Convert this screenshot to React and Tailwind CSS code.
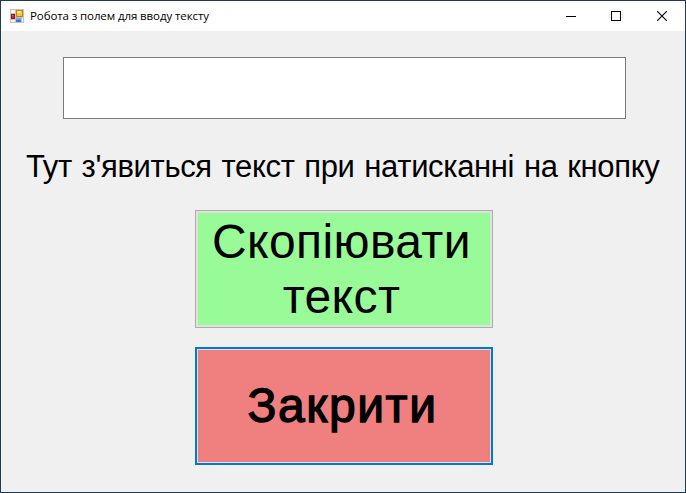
function AppIcon() {
  return (
    <svg width="14" height="14" viewBox="0 0 14 14" shapeRendering="crispEdges">
      <rect x="0" y="0" width="14" height="14" fill="#c3c3c3" />
      <rect x="1" y="1" width="4" height="3" fill="#f4f4f4" />
      <rect x="1" y="11" width="4" height="2" fill="#f4f4f4" />
      <rect x="12" y="9" width="1" height="4" fill="#f4f4f4" />
      <rect x="1" y="5" width="4" height="5" fill="#8e1515" />
      <rect x="2" y="6" width="2" height="3" fill="#c9302c" />
      <rect x="2" y="6" width="1" height="1" fill="#e07068" />
      <rect x="6" y="1" width="7" height="7" fill="#b98410" />
      <rect x="7" y="2" width="5" height="5" fill="#f8c832" />
      <rect x="7" y="2" width="4" height="2" fill="#fde68a" />
      <rect x="6" y="9" width="5" height="4" fill="#3f74cc" />
      <rect x="6" y="9" width="5" height="2" fill="#6fa4ee" />
    </svg>
  );
}

function TitleBar() {
  return (
    <header className="flex h-[30px] shrink-0 items-center bg-white pl-[9px]">
      <AppIcon />
      <h1 className="ml-[6px] whitespace-nowrap font-['Open_Sans','Noto_Sans',sans-serif] text-[11.5px] leading-[16px] tracking-[-0.1px]">
        Робота з полем для вводу тексту
      </h1>
      <div className="ml-auto flex" aria-hidden="true">
        <div className="flex h-[30px] w-[46px] items-center justify-center">
          <svg width="10" height="10" shapeRendering="crispEdges">
            <rect y="5" width="10" height="1" />
          </svg>
        </div>
        <div className="flex h-[30px] w-[45px] items-center justify-start pl-[17px]">
          <svg width="10" height="10" shapeRendering="crispEdges">
            <path d="M.5.5h9v9h-9z" fill="none" stroke="#000" />
          </svg>
        </div>
        <div className="flex h-[30px] w-[46px] items-center justify-center">
          <svg width="10" height="10">
            <path d="M0 0l10 10M10 0L0 10" fill="none" stroke="#000" strokeWidth="1.1" />
          </svg>
        </div>
      </div>
    </header>
  );
}

export default function App() {
  return (
    <div className="flex h-[493px] w-[686px] flex-col overflow-hidden border border-[#1f3b54] bg-[#f0f0f0] font-['Liberation_Sans',Arial,sans-serif] text-black">
      <TitleBar />
      <main className="flex flex-1 flex-col items-start">
        <input
          type="text"
          className="mt-[26px] ml-[62px] h-[62px] w-[563px] border border-[#7a7a7a] bg-white px-2 text-[32px] outline-none"
        />
        <p className="mt-[30px] ml-[25px] h-[36px] whitespace-nowrap text-[31px] leading-[36px] tracking-[-0.35px] [word-spacing:1.5px]">
          Тут з'явиться текст при натисканні на кнопку
        </p>
        <button className="mt-[25px] ml-[194px] flex h-[118px] w-[298px] flex-col items-center border border-[#adadad] bg-[#e1e1e1] p-[2px]">
          <span className="flex h-[112px] w-full flex-col items-center justify-center bg-[#98fb98] pr-[5px] text-[48px] leading-[55px] tracking-[0.4px]">
            <span className="whitespace-nowrap">Скопіювати</span>
            <span className="whitespace-nowrap">текст</span>
          </span>
        </button>
        <button className="mt-[19px] ml-[194px] flex h-[118px] w-[298px] flex-col border-2 border-[#0078d7] bg-[#e1e1e1] p-px">
          <span className="flex h-[112px] w-full items-center justify-center bg-[#f08080] pr-[3px] pb-[2px] text-[48px] leading-[55px] tracking-[1.6px] [-webkit-text-stroke:1.3px_black]">
            Закрити
          </span>
        </button>
      </main>
    </div>
  );
}
